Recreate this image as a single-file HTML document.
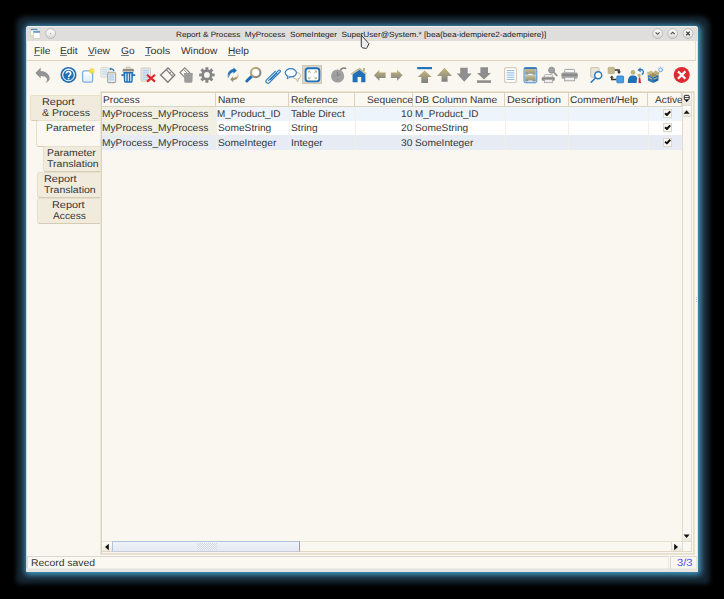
<!DOCTYPE html>
<html><head><meta charset="utf-8">
<style>
html,body{margin:0;padding:0}
body{width:724px;height:599px;background:#000;position:relative;overflow:hidden;font-family:"Liberation Sans",sans-serif;font-size:10.2px;color:#2e2e2e}
.a{position:absolute}
.t{position:absolute;white-space:nowrap;line-height:12px;color:#363636;font-size:9.8px;text-rendering:geometricPrecision;transform:scaleX(1.04);transform-origin:0 0}
#win{left:26px;top:26px;width:672px;height:546px;background:#faf7f0;border-radius:3px 3px 1px 1px;box-shadow:1px 1px 6px 2px rgb(66,156,197),1px 1px 4.5px 11px rgb(21,35,46)}
#title{left:26px;top:26px;width:672px;height:15px;background:#dfdedc;border-radius:3px 3px 0 0}
#menubar{left:27px;top:41px;width:668px;height:19px;border-bottom:1px solid #ddd3bd;border-right:1px solid #e6dfcf;background:#faf8f1}
.menu{top:46px;color:#333}
.menu u{text-decoration:underline;text-underline-offset:0.5px;text-decoration-color:#777}
.tab{position:absolute;background:#f0ebdd;border:1px solid #e6dfcc;border-bottom-color:#d5ccb5;border-radius:3px}
#table{left:100px;top:91px;width:593px;height:462px;border:1px solid #ebe4d3;background:#f9f7f0}
#tinner{left:101px;top:92px;width:591px;height:460px;border:1px solid #dcd3bd;border-right-color:#e6dfcd;border-bottom-color:#e6dfcd}
.hd{position:absolute;top:93px;height:13px;background:#faf8f0;border-right:1px solid #d9d1bd;border-bottom:1px solid #ddd4bf}
.row{position:absolute;left:102px;width:580px;height:14px}
.sep{position:absolute;top:107px;width:1px;height:43px;background:#f2efe6}
.cb{position:absolute;width:7px;height:7px;border:1px solid #dcd7c8;background:#f9f8f4}

#status{left:27px;top:556px;width:640px;height:11px;border:1px solid #d9d8d2;border-right-color:#e9e7e0;border-bottom-color:#ecebe6;background:#faf8f1}
#bstrip{left:26px;top:568px;width:672px;height:4px;background:#e5e4e1;border-radius:0 0 3px 3px}
#count{left:670px;top:556px;width:25px;height:11px;border:1px solid #d9d8d2;border-right-color:#e9e7e0;border-bottom-color:#ecebe6;background:#f9f7f0}
</style></head><body>
<div id="win" class="a"></div>
<div id="title" class="a"></div>
<div class="a" style="left:26px;top:41px;width:1px;height:531px;background:#c9d7df"></div>
<div id="menubar" class="a"></div>
<div class="t" style="left:176px;top:29px;font-size:7.6px;transform:scaleX(1.08);color:#1a1a1a">Report &amp; Process&nbsp; MyProcess&nbsp; SomeInteger&nbsp; SuperUser@System.* [bea{bea-idempiere2-adempiere}]</div>

<div class="t menu" style="left:34px"><u>F</u>ile</div>
<div class="t menu" style="left:60px"><u>E</u>dit</div>
<div class="t menu" style="left:88px"><u>V</u>iew</div>
<div class="t menu" style="left:121px"><u>G</u>o</div>
<div class="t menu" style="left:145px;transform:scaleX(1.1)"><u>T</u>ools</div>
<div class="t menu" style="left:181px">Window</div>
<div class="t menu" style="left:228px"><u>H</u>elp</div>

<svg class="a" style="left:0;top:0" width="724" height="599" viewBox="0 0 724 599">
<defs>
<linearGradient id="gold" x1="0" y1="0" x2="0" y2="1"><stop offset="0" stop-color="#c4b47a"/><stop offset="1" stop-color="#7d8184"/></linearGradient>
<linearGradient id="goldr" x1="0" y1="0" x2="1" y2="0"><stop offset="0" stop-color="#8d8a76"/><stop offset="1" stop-color="#c2b27c"/></linearGradient>
<linearGradient id="docfill" x1="0" y1="0" x2="0" y2="1"><stop offset="0" stop-color="#ffffff"/><stop offset="1" stop-color="#e2ebf5"/></linearGradient>
<linearGradient id="ring" x1="0" y1="0" x2="1" y2="1"><stop offset="0" stop-color="#c9b877"/><stop offset="1" stop-color="#7f8184"/></linearGradient>
</defs>
<!-- undo -->
<path d="M35.4 73 L40.7 67.6 L40.7 71.1 C45.6 71.2 49.7 74.3 49.7 78.5 C49.7 80.4 48.2 82 45.3 82.9 C46.9 81.4 47.5 79.8 46.8 78.4 C46 76.9 43.8 76.1 40.7 76.1 L40.7 78.5 Z" fill="#939393"/>
<!-- help -->
<circle cx="68.5" cy="74.9" r="8" fill="#1f70b4"/>
<circle cx="68.5" cy="74.9" r="5.8" fill="none" stroke="#ffffff" stroke-width="1.05"/>
<path d="M66.3 73.6 C66.3 70.9 70.7 70.9 70.7 73.4 C70.7 75 68.6 75.1 68.6 76.9" fill="none" stroke="#fff" stroke-width="1.6"/>
<circle cx="68.6" cy="78.6" r="0.95" fill="#fff"/>
<!-- new -->
<rect x="82.6" y="70.8" width="10" height="11.4" rx="1.8" fill="url(#docfill)" stroke="#7eb0dc" stroke-width="1.3"/>
<path d="M95.70 70.90 L93.37 71.55 L94.56 73.66 L92.45 72.47 L91.80 74.80 L91.15 72.47 L89.04 73.66 L90.23 71.55 L87.90 70.90 L90.23 70.25 L89.04 68.14 L91.15 69.33 L91.80 67.00 L92.45 69.33 L94.56 68.14 L93.37 70.25 Z" fill="#f3d51e"/>
<circle cx="91.8" cy="70.9" r="1.6" fill="#f7e04a"/>
<!-- copy -->
<rect x="100.8" y="67.6" width="7.6" height="9.6" rx="1.2" fill="#e9f0f7" stroke="#e3d9bf" stroke-width="1"/>
<path d="M102.2 69.6h4.8M102.2 71.3h4.8M102.2 73h4.8M102.2 74.7h4.8" stroke="#b5cfe8" stroke-width="0.7"/>
<rect x="107.6" y="72.4" width="8" height="10.2" rx="1.2" fill="#dce8f4" stroke="#aaa69a" stroke-width="1.1"/>
<path d="M107.6 73 h8" stroke="#d8cca8" stroke-width="1"/>
<path d="M109 74.6h5M109 76.3h5M109 78h5M109 79.7h5" stroke="#a9c6e2" stroke-width="0.8"/>
<path d="M110.6 69 C112.4 68.8 113.6 69.6 113.8 71.2" fill="none" stroke="#2d7bbf" stroke-width="1.3"/>
<path d="M109 68.9 L111.2 67.2 L111.2 70.6 Z" fill="#2d7bbf"/>
<!-- trash -->
<path d="M126.6 68.4 v-1.2 h3.4 v1.2" fill="none" stroke="#c2b68c" stroke-width="1"/>
<path d="M122.2 71.6 L123.2 68.8 L133.4 68.8 L134.4 71.6 Z" fill="#8f8e86"/>
<path d="M123.4 72 L133.2 72 L132.6 81.4 Q132.4 82.7 131.2 82.7 L125.4 82.7 Q124.2 82.7 124 81.4 Z" fill="#1e6fb6"/>
<path d="M121.4 75.2 h2.4 M132.8 75.2 h2.4" stroke="#1e6fb6" stroke-width="1.8"/>
<path d="M125.8 73.6 v7.6 M128.3 73.6 v7.6 M130.8 73.6 v7.6" stroke="#eaf2fa" stroke-width="1.1"/>
<!-- delete selection -->
<rect x="141" y="68" width="9.6" height="13.2" rx="1" fill="#dfe9f4" stroke="#d8ccb0" stroke-width="1"/>
<path d="M142.6 70.4h6.4M142.6 72.2h6.4M142.6 74h6.4M142.6 75.8h6.4M142.6 77.6h6.4M142.6 79.4h6.4" stroke="#a8c6e4" stroke-width="0.8"/>
<path d="M147 74.8 L155 81.6 M155 74.8 L147 81.6" stroke="#e0242c" stroke-width="2.1"/>
<!-- diamond save -->
<g fill="none" stroke="#7c7c7c">
<path d="M168 67.9 L174.8 74.9 L167.8 82.2 L160.6 74.9 Z" stroke-width="1.35"/>
<path d="M166.4 69.6 L172.6 76.6" stroke-width="1.1"/>
<path d="M169.8 73.2 L171.6 71.4" stroke-width="0.9"/>
</g>
<path d="M172.6 76.6 L174.4 74.8 L173.2 73.6 L171.4 75.4 Z" fill="#a8a8a8"/>
<!-- diamond + bucket -->
<g fill="none" stroke="#858585">
<path d="M184.8 67.8 L189.6 72.6 L184.8 77.4 L180 72.6 Z" stroke-width="1.2"/>
<path d="M183.4 69.2 L187.8 73.8" stroke-width="0.9"/>
</g>
<path d="M184 73 L192.8 73 L192.4 81.4 Q192.3 82.8 191 82.8 L185.6 82.8 Q184.4 82.8 184.3 81.4 Z" fill="#9c9c9c"/>
<!-- gear -->
<path fill="#858585" fill-rule="evenodd" d="M205.45 69.49 L205.39 67.15 L208.41 67.15 L208.35 69.49 L209.70 70.05 L211.32 68.35 L213.45 70.48 L211.75 72.10 L212.31 73.45 L214.65 73.39 L214.65 76.41 L212.31 76.35 L211.75 77.70 L213.45 79.32 L211.32 81.45 L209.70 79.75 L208.35 80.31 L208.41 82.65 L205.39 82.65 L205.45 80.31 L204.10 79.75 L202.48 81.45 L200.35 79.32 L202.05 77.70 L201.49 76.35 L199.15 76.41 L199.15 73.39 L201.49 73.45 L202.05 72.10 L200.35 70.48 L202.48 68.35 L204.10 70.05 Z M209.80 74.90 A2.9 2.9 0 1 0 204.00 74.90 A2.9 2.9 0 1 0 209.80 74.90 Z"/>
<!-- refresh -->
<linearGradient id="rfb" x1="0" y1="1" x2="0.6" y2="0"><stop offset="0" stop-color="#2a7bc0" stop-opacity="0.35"/><stop offset="0.35" stop-color="#2374ba"/><stop offset="1" stop-color="#1f6fb5"/></linearGradient>
<linearGradient id="rfg" x1="0.6" y1="0" x2="0" y2="1"><stop offset="0" stop-color="#c9bb84" stop-opacity="0.4"/><stop offset="0.4" stop-color="#a89d77"/><stop offset="1" stop-color="#858680"/></linearGradient>
<path d="M227.6 77.8 C227.2 73 229.4 69.6 233.4 69 L233.4 67.4 L236.9 70.5 L233.4 73.8 L233.4 71.9 C230.8 72.4 229.2 74.6 228.9 78 Z" fill="url(#rfb)"/>
<path d="M238.2 72.2 C239.9 75.8 238.2 79.6 233.2 80.3 L233.2 82.3 L230.2 79.2 L233.2 76.3 L233.2 78 C236.6 77.6 238.2 75.6 237.2 72.6 Z" fill="url(#rfg)"/>
<!-- find -->
<path d="M246.8 81 L251.4 76.6" stroke="#1e6fb6" stroke-width="3" stroke-linecap="round"/>
<circle cx="255.7" cy="72.5" r="4.7" fill="#fff" stroke="url(#ring)" stroke-width="2.2"/>
<!-- paperclip -->
<path d="M268.2 80.8 L278.4 70.6 C279.6 69.4 281.2 70.8 280 72 L269.4 82.6 C267.4 84.6 264.6 81.8 266.6 79.8 L275.6 70.8 M270.2 79.8 L277.2 72.8" fill="none" stroke="#2f7ec2" stroke-width="1.2"/>
<!-- chat -->
<ellipse cx="296.6" cy="75.8" rx="4" ry="3.4" fill="#fbfaf5" stroke="#c9bf9c" stroke-width="1"/>
<path d="M296.2 79 L297.6 81.8 L298.6 78.8" fill="#fbfaf5" stroke="#b8b39f" stroke-width="0.9"/>
<ellipse cx="290.8" cy="72.8" rx="5.6" ry="4.1" fill="#fff" stroke="#2f7ec2" stroke-width="1.2"/>
<path d="M287.6 76.2 L287.2 78.8 L290.4 76.9" fill="#fff" stroke="#2f7ec2" stroke-width="1"/>
<!-- multirow toggle pressed -->
<rect x="302.5" y="65.5" width="19" height="18" fill="#ddd7c9" stroke="#cfc7b5" stroke-width="1"/>
<rect x="305.6" y="68.2" width="13.8" height="13.2" rx="2.6" fill="#fff" stroke="#1f70b6" stroke-width="1.9"/>
<g fill="none" stroke="#b9a86a" stroke-width="0.9">
<path d="M308.6 72.6 v-1.6 h1.6 M308.8 71.2 l2 2"/>
<path d="M316.4 72.6 v-1.6 h-1.6 M316.2 71.2 l-2 2"/>
<path d="M308.6 77.2 v1.6 h1.6 M308.8 78.6 l2 -2"/>
<path d="M316.4 77.2 v1.6 h-1.6 M316.2 78.6 l-2 -2"/>
</g>
<!-- bomb -->
<path d="M340.4 70.6 C341.2 68.2 344 67.2 346.2 68.6" fill="none" stroke="#7d7d7d" stroke-width="1.5"/>
<circle cx="337.6" cy="76" r="6.6" fill="#a0a0a0"/>
<path d="M337.4 71.6 v4.4 l2.6 -1.8 M333.4 76 h0.9 M337.6 79.6 v0.9" fill="none" stroke="#7a7a7a" stroke-width="0.8"/>
<!-- home -->
<path d="M351 73.6 L359.5 67.8 L366.6 73.2 L366.6 74.6 L359.5 69.6 L351 74.8 Z" fill="#c2b585"/>
<rect x="363" y="68" width="2" height="3" fill="#c2b585"/>
<path d="M352.6 74.2 L359.5 69.8 L365.4 74.2 L365.4 82.2 L361.2 82.2 L361.2 77 L357.6 77 L357.6 82.2 L352.6 82.2 Z" fill="#1f70b6"/>
<!-- left/right arrows -->
<path d="M373.9 75.2 L379.4 69.7 L379.4 72.6 L385.6 72.6 L385.6 78 L379.4 78 L379.4 80.8 Z" fill="url(#gold)"/>
<path d="M402.6 75.2 L397.1 69.7 L397.1 72.6 L390.9 72.6 L390.9 78 L397.1 78 L397.1 80.8 Z" fill="url(#gold)"/>
<!-- first -->
<rect x="417.2" y="67" width="14.8" height="2.2" fill="#2374ba"/>
<path d="M417.8 76.9 L424.6 70.6 L431.6 76.9 L428 76.9 L428 82.9 L421.3 82.9 L421.3 76.9 Z" fill="url(#gold)"/>
<!-- up -->
<path d="M437 75.9 L444.5 67.8 L452 75.9 L447.6 75.9 L447.6 81.8 L441.5 81.8 L441.5 75.9 Z" fill="url(#gold)"/>
<!-- down -->
<path d="M456.8 73.6 L460.2 73.6 L460.2 67.8 L467.7 67.8 L467.7 73.6 L471.7 73.6 L464.2 81.8 Z" fill="#8e8e8e"/>
<!-- last -->
<path d="M477 73 L480.4 73 L480.4 67.2 L488 67.2 L488 73 L490.9 73 L484 79.6 Z" fill="#8e8e8e"/>
<rect x="477" y="80.3" width="14" height="2.6" fill="#8e8e8e"/>
<!-- report -->
<rect x="504.6" y="67.7" width="11.8" height="14.8" rx="2" fill="#fff" stroke="#d4cdb8" stroke-width="1.2"/>
<path d="M506.6 70.6h7.8M506.6 72.8h7.8M506.6 75h7.8M506.6 77.2h7.8M506.6 79.4h7.8" stroke="#8db8e2" stroke-width="1"/>
<!-- archive -->
<linearGradient id="drw" x1="0" y1="0" x2="0" y2="1"><stop offset="0" stop-color="#cbbd86"/><stop offset="1" stop-color="#8f8f80"/></linearGradient>
<rect x="524" y="67.6" width="12.8" height="15.2" rx="1.6" fill="#b9d4ec" stroke="#4d92cf" stroke-width="1"/>
<rect x="524" y="67.4" width="12.8" height="1.6" rx="0.8" fill="#2a78bd"/>
<rect x="525.2" y="69" width="10.4" height="5.4" fill="url(#drw)"/>
<rect x="525.2" y="75.6" width="10.4" height="5.6" fill="url(#drw)"/>
<path d="M528.2 74.2h4.4M528.2 81h4.4" stroke="#fff" stroke-width="1.1"/>
<!-- print preview -->
<circle cx="551.6" cy="70.2" r="3" fill="#a2a2a2" stroke="#909090" stroke-width="1"/>
<path d="M553.8 72.4 L557.2 75.8" stroke="#939393" stroke-width="1.7"/>
<rect x="544.4" y="74.6" width="8" height="3" rx="0.8" fill="#f6f6f6" stroke="#aaaaaa" stroke-width="0.9"/>
<rect x="541.8" y="76.8" width="12.8" height="4.2" rx="1.2" fill="#a3a3a3"/>
<rect x="541.8" y="77.8" width="12.8" height="1.8" fill="#8a8a8a"/>
<rect x="544.4" y="79.6" width="8" height="3" fill="#efefef" stroke="#a8a8a8" stroke-width="0.9"/>
<!-- print -->
<rect x="564.6" y="69.4" width="10" height="3.6" rx="0.8" fill="#f6f6f6" stroke="#a4a4a4" stroke-width="1"/>
<rect x="561.6" y="72.4" width="16" height="6.4" rx="1.4" fill="#a3a3a3"/>
<rect x="561.6" y="73.8" width="16" height="2.4" fill="#8a8a8a"/>
<rect x="564.6" y="77.2" width="10" height="3.6" fill="#efefef" stroke="#a4a4a4" stroke-width="1"/>
<!-- zoom across -->
<rect x="590.8" y="67.6" width="8.2" height="9.6" rx="0.8" fill="#e9e5d6" stroke="#cbc3a6" stroke-width="1"/>
<circle cx="598.2" cy="75.2" r="3.5" fill="#fff" stroke="#2a78bd" stroke-width="1.5"/>
<path d="M595.6 77.8 L591.2 82.2" stroke="#2a78bd" stroke-width="1.6" stroke-linecap="round"/>
<!-- workflow -->
<rect x="608.2" y="67.4" width="6.2" height="6.2" rx="0.8" fill="#c6bc94" stroke="#b1a784" stroke-width="0.8"/>
<rect x="616.8" y="76" width="6.8" height="6.8" rx="0.8" fill="#4a9de6" stroke="#2a78bd" stroke-width="0.8"/>
<path d="M614.8 69.9 h4.2 v2" fill="none" stroke="#333" stroke-width="1.5"/>
<path d="M617 71.6 l2 2.4 l2 -2.4 Z" fill="#333"/>
<path d="M616.2 79.6 h-4.4 v-2" fill="none" stroke="#333" stroke-width="1.5"/>
<path d="M609.8 77.8 l2 -2.4 l2 2.4 Z" fill="#333"/>
<!-- requests -->
<circle cx="633" cy="72.4" r="2.4" fill="#c0b482"/>
<path d="M627.8 82.9 C627.8 77.4 629.8 75.6 633 75.6 C636.1 75.6 638 77.4 638 82.9 Z" fill="#1f70b6"/>
<circle cx="639.2" cy="75.4" r="1.6" fill="#c0b482"/>
<path d="M636.6 82.9 C636.6 79 637.6 77.4 639.3 77.4 C641 77.4 642.2 79 642.2 82.9 Z" fill="#f4f4f4"/>
<path d="M638.8 77.6 L640.2 77.6 L641 82.9 L638.6 82.9 Z" fill="#d9222c"/>
<path d="M639.8 69.8 C642.2 69 643.8 70.6 643.2 72.8 C643 73.6 642.4 74.2 641.8 74.6" fill="none" stroke="#2a78bd" stroke-width="1.4"/>
<path d="M637.4 69.9 L640.6 67.6 L640.6 72.2 Z" fill="#2a78bd"/>
<!-- product info box -->
<path d="M647.8 75 L653.2 72.8 L658.6 75 L653.2 77.4 Z" fill="#a08f5c"/>
<path d="M647.8 75 L653.2 77.4 L653.2 82.9 L647.9 80.4 Z" fill="#2a78bd"/>
<path d="M653.2 77.4 L658.6 75 L658.4 80.4 L653.2 82.9 Z" fill="#1c62a2"/>
<path d="M648.6 77.4 l3.6 1.6 M654 79.2 l3.6 -1.6" stroke="#c8b882" stroke-width="1.1"/>
<path d="M647.8 75 L646.6 72.8 L651.6 70.6 L653.2 72.8 Z" fill="#c9b983"/>
<path d="M653.2 72.8 L655.2 70.4 L659.6 72.6 L658.6 75 Z" fill="#bcae7a"/>
<circle cx="660.6" cy="69.8" r="1.9" fill="#e6f2fc" stroke="#5aa0e0" stroke-width="0.9"/>
<path d="M660.6 66.2 v1 M663.4 67.2 l-0.8 0.8 M657.8 67.2 l0.8 0.8 M664.3 69.8 h-1.1" stroke="#a4c8ea" stroke-width="0.7"/>
<!-- close -->
<circle cx="681.7" cy="74.9" r="8" fill="#dc2a33"/>
<path d="M678 71.4 L685.4 78.8 M685.4 71.4 L678 78.8" stroke="#fff" stroke-width="2.2"/>
</svg>

<!-- tabs -->
<div class="tab" style="left:30px;top:95px;width:72px;height:24px"></div>
<div class="tab" style="left:36px;top:120px;width:66px;height:25px;background:#faf8f1"></div>
<div class="tab" style="left:43px;top:146px;width:59px;height:24px"></div>
<div class="tab" style="left:37px;top:172px;width:65px;height:24px"></div>
<div class="tab" style="left:37px;top:198px;width:65px;height:24px"></div>
<div class="t" style="left:42px;top:97px;transform:scaleX(1.11)">Report</div>
<div class="t" style="left:42px;top:108px;transform:scaleX(1.075)">&amp; Process</div>
<div class="t" style="left:46px;top:123px;transform:scaleX(1.065)">Parameter</div>
<div class="t" style="left:47px;top:148px;transform:scaleX(1.065)">Parameter</div>
<div class="t" style="left:47px;top:159px;transform:scaleX(1.075)">Translation</div>
<div class="t" style="left:44px;top:174px;transform:scaleX(1.11)">Report</div>
<div class="t" style="left:44px;top:185px;transform:scaleX(1.075)">Translation</div>
<div class="t" style="left:52px;top:200px;transform:scaleX(1.11)">Report</div>
<div class="t" style="left:53px;top:211px">Access</div>

<!-- table -->
<div id="table" class="a"></div>
<div id="tinner" class="a"></div>
<div class="hd" style="left:102px;width:113px"></div>
<div class="hd" style="left:216px;width:72px"></div>
<div class="hd" style="left:289px;width:65px"></div>
<div class="hd" style="left:355px;width:57px"></div>
<div class="hd" style="left:413px;width:91px"></div>
<div class="hd" style="left:505px;width:63px"></div>
<div class="hd" style="left:569px;width:78px"></div>
<div class="hd" style="left:648px;width:33px"></div>
<div class="t" style="left:103px;top:95px">Process</div>
<div class="t" style="left:218px;top:95px">Name</div>
<div class="t" style="left:291px;top:95px">Reference</div>
<div class="t" style="left:367px;top:95px">Sequence</div>
<div class="t" style="left:415px;top:95px">DB Column Name</div>
<div class="t" style="left:507px;top:95px;transform:scaleX(1.1)">Description</div>
<div class="t" style="left:570px;top:95px">Comment/Help</div>
<div class="t" style="left:655px;top:95px">Active</div>

<div class="row" style="top:107px;background:#eef4fb"></div>
<div class="row" style="top:121px;background:#ffffff"></div>
<div class="row" style="top:135px;height:15px;background:#e7ecf4"></div>
<div class="a" style="left:102px;top:107px;width:114px;height:28px;background:#f1efe1"></div>
<div class="sep" style="left:216px"></div>
<div class="sep" style="left:289px"></div>
<div class="sep" style="left:355px"></div>
<div class="sep" style="left:413px"></div>
<div class="sep" style="left:505px"></div>
<div class="sep" style="left:568px"></div>
<div class="sep" style="left:648px"></div>

<div class="t" style="left:102px;top:109px">MyProcess_MyProcess</div>
<div class="t" style="left:102px;top:123px">MyProcess_MyProcess</div>
<div class="t" style="left:102px;top:138px">MyProcess_MyProcess</div>
<div class="t" style="left:217px;top:109px;transform:scaleX(1.013)">M_Product_ID</div>
<div class="t" style="left:218px;top:123px">SomeString</div>
<div class="t" style="left:218px;top:138px">SomeInteger</div>
<div class="t" style="left:291px;top:109px">Table Direct</div>
<div class="t" style="left:291px;top:123px">String</div>
<div class="t" style="left:291px;top:138px">Integer</div>
<div class="t" style="left:401px;top:109px">10</div>
<div class="t" style="left:401px;top:123px">20</div>
<div class="t" style="left:401px;top:138px">30</div>
<div class="t" style="left:415px;top:109px;transform:scaleX(1.013)">M_Product_ID</div>
<div class="t" style="left:415px;top:123px">SomeString</div>
<div class="t" style="left:415px;top:138px">SomeInteger</div>
<div class="cb" style="left:663px;top:109px"></div>
<div class="cb" style="left:663px;top:123px"></div>
<div class="cb" style="left:663px;top:138px"></div>
<svg class="a" style="left:0;top:0" width="724" height="160" viewBox="0 0 724 160">
<g fill="none" stroke="#111" stroke-width="2" stroke-linejoin="round">
<path d="M665.1 113.2 L666.9 115 L670.2 111.4"/>
<path d="M665.1 127.2 L666.9 129 L670.2 125.4"/>
<path d="M665.1 141.6 L666.9 143.4 L670.2 139.8"/>
</g></svg>

<!-- title bar decorations -->
<div class="a" style="left:28px;top:26px;width:668px;height:1px;background:#eeeeec"></div>
<svg class="a" style="left:0;top:0" width="724" height="100" viewBox="0 0 724 100">
<defs>
<linearGradient id="btn" x1="0" y1="0" x2="0" y2="1"><stop offset="0" stop-color="#fdfdfd"/><stop offset="0.5" stop-color="#f0f0f0"/><stop offset="1" stop-color="#d2d2d2"/></linearGradient>
</defs>
<rect x="30.8" y="28.8" width="6.4" height="6.6" fill="#fbfbfb" stroke="#d6cfb8" stroke-width="0.8"/>
<rect x="30.8" y="28.8" width="6.4" height="1.4" fill="#4d8ec9"/>
<rect x="33.4" y="31.2" width="6.6" height="7.2" fill="#ffffff" stroke="#d6cfb8" stroke-width="0.8"/>
<rect x="33.4" y="31.2" width="6.6" height="1.5" fill="#4d8ec9"/>
<circle cx="50.6" cy="33.6" r="4.9" fill="url(#btn)" stroke="#b4b4b4" stroke-width="0.9"/>
<circle cx="50.6" cy="33.4" r="0.5" fill="#888"/>
<circle cx="657.6" cy="33.6" r="4.9" fill="url(#btn)" stroke="#b4b4b4" stroke-width="0.9"/>
<path d="M655.6 32.4 l2 1.9 l2 -1.9" fill="none" stroke="#505050" stroke-width="1.15"/>
<circle cx="672.7" cy="33.6" r="4.9" fill="url(#btn)" stroke="#b4b4b4" stroke-width="0.9"/>
<path d="M670.7 34.2 l2 -1.9 l2 1.9" fill="none" stroke="#505050" stroke-width="1.15"/>
<circle cx="688" cy="33.6" r="4.9" fill="url(#btn)" stroke="#b4b4b4" stroke-width="0.9"/>
<path d="M686.2 31.6 l3.6 3.6 M689.8 31.6 l-3.6 3.6" fill="none" stroke="#404040" stroke-width="1.25"/>
</svg>
<!-- vertical scrollbar -->
<div class="a" style="left:682px;top:117px;width:8px;height:414px;background:#f9f7f0;border-left:1px solid #e2dac6;border-right:1px solid #e6dfcd"></div>
<div class="a" style="left:682px;top:93px;width:8px;height:12px;background:linear-gradient(#fdfdfb,#e9e6de);border:1px solid #e2dccb;border-top:0"></div>
<div class="a" style="left:682px;top:106px;width:8px;height:10px;background:linear-gradient(#fefefd,#ebe8df);border:1px solid #e2dccb;border-top:0"></div>
<div class="a" style="left:682px;top:531px;width:8px;height:10px;background:linear-gradient(#fefefd,#ebe8df);border:1px solid #e2dccb;border-top:0"></div>
<div class="a" style="left:682px;top:542px;width:8px;height:9px;background:#faf8f2;border:1px solid #e2dac6;border-top:0"></div>
<!-- horizontal scrollbar -->
<div class="a" style="left:102px;top:541px;width:580px;height:9px;background:#f9f7f0;border-top:1px solid #e8e1cf;border-bottom:1px solid #e2dac6"></div>
<div class="a" style="left:102px;top:542px;width:10px;height:9px;background:linear-gradient(#fefefd,#ebe8df);border-right:1px solid #e2dccb"></div>
<div class="a" style="left:671px;top:542px;width:10px;height:9px;background:linear-gradient(#fefefd,#ebe8df);border-left:1px solid #e2dccb;border-right:1px solid #e2dccb"></div>
<div class="a" style="left:112px;top:541px;width:186px;height:9px;background:linear-gradient(#eef2f9,#e4e9f3);border:1px solid #b2c3dc;border-right-color:#8ca6c8;border-bottom-color:#c6cdd8"></div>
<div class="a" style="left:197px;top:543px;width:20px;height:7px;background-image:repeating-conic-gradient(#d3d9e3 0 25%, #eef1f6 0 50%);background-size:2px 2px"></div>
<svg class="a" style="left:0;top:0" width="724" height="599" viewBox="0 0 724 599">
<path d="M683.6 113.8 L686.6 110.2 L689.6 113.8 Z" fill="#111"/>
<path d="M683.6 534.4 L686.6 538 L689.6 534.4 Z" fill="#111"/>
<path d="M108.8 543.8 L105 547 L108.8 550.2 Z" fill="#111"/>
<path d="M674.2 543.8 L678 547 L674.2 550.2 Z" fill="#111"/>
<!-- column chooser icon -->
<rect x="684.3" y="95.3" width="4.8" height="4.4" rx="0.6" fill="#f4f4f4" stroke="#222" stroke-width="1"/>
<path d="M684.3 97.5 h4.8" stroke="#222" stroke-width="0.8"/>
<path d="M685 100 L686.7 102.2 L688.4 100 Z" fill="#111"/>
<!-- resize dots -->
<path d="M696.6 297 v0.8 M696.6 299 v0.8 M696.6 301 v0.8" stroke="#9a9a9a" stroke-width="0.8"/>
<!-- cursor -->
<path d="M361.3 35.3 L361.3 46.2 Q361.5 47.4 362.6 47.8 L365.6 48.4 Q366.6 48.4 367.1 47.6 L368.9 43.6 Z" fill="#eeeeee" stroke="#222" stroke-width="0.9" stroke-linejoin="round"/>
</svg>
<div class="a" style="left:697px;top:41px;width:1px;height:531px;background:#dde3e6"></div>

<!-- status -->
<div id="bstrip" class="a"></div>
<div id="status" class="a"></div>
<div id="count" class="a"></div>
<div class="t" style="left:31px;top:558px;transform:scaleX(1.06);color:#333">Record saved</div>
<div class="t" style="left:677px;top:558px;color:#4d4df5;font-size:10.3px;transform:scaleX(1.08)">3/3</div>
</body></html>
